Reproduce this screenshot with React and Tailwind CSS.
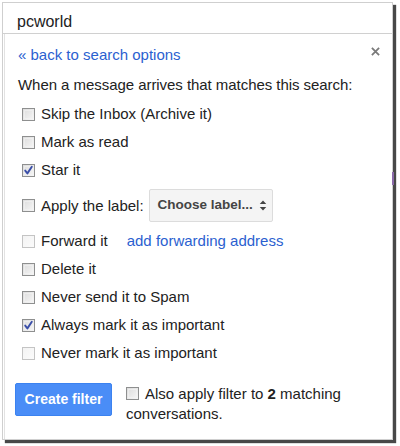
import React from "react";

function Box({ checked = false, disabled = false, className = "" }) {
  return (
    <span
      className={
        "relative inline-block w-[13px] h-[13px] shrink-0 border " +
        (disabled
          ? "border-[#c4c4c4] bg-[linear-gradient(135deg,#f3f3f3,#fbfbfb)] "
          : "border-[#8e8f8f] bg-[linear-gradient(135deg,#dcdcdc,#f6f6f6)] ") +
        className
      }
    >
      {!disabled && (
        <span className="absolute inset-[1px] border border-[#f4f4f4] opacity-60" />
      )}
      {checked && (
        <svg viewBox="0 0 13 13" className="absolute left-[-1px] top-[-1px] w-[13px] h-[13px]">
          <path d="M3.2 6.6 L5.4 9.4 L9.8 2.8" fill="none" stroke="#3a4ea8" strokeWidth="1.9" strokeLinecap="round" strokeLinejoin="round" />
        </svg>
      )}
    </span>
  );
}

function Row({ label, checked, disabled, children, h = "h-[28px]" }) {
  return (
    <div className={"flex items-center pl-[20px] " + h}>
      <Box checked={checked} disabled={disabled} />
      <span className="ml-[6px] text-[15px] text-[#222] leading-[20px] whitespace-nowrap">{label}</span>
      {children}
    </div>
  );
}

export default function App() {
  return (
    <div
      className="relative w-[400px] h-[446px] bg-white overflow-hidden"
      style={{ fontFamily: '"Liberation Sans", Arial, sans-serif' }}
    >
      <div className="ml-[2px] mt-[2px] w-[391px] h-[438px] border border-[#cfcfcf] bg-white shadow-[3px_3px_1px_rgba(40,40,40,0.85)] flex flex-col">
        <div className="h-[31px] shrink-0 border-b border-[#d0d0d0] pl-[14px] flex items-end pb-[1px]">
          <span className="text-[16px] text-[#222] leading-[20px]">pcworld</span>
        </div>
        <div className="relative flex-1 ml-[1px] border-l border-[#e2e2e2] flex flex-col">
          <div className="mt-[11px] h-[20px] flex items-center pl-[13px]">
            <span className="text-[15px] text-[#2b5fd0] leading-[20px]">« back to search options</span>
          </div>
          <svg viewBox="0 0 10 10" className="absolute left-[366px] top-[13px] w-[9px] h-[9px]">
            <path d="M1 1 L9 9 M9 1 L1 9" stroke="#7a7a7a" strokeWidth="2" />
          </svg>
          <div className="mt-[6px] h-[28px] flex items-center pl-[13px]">
            <span className="text-[15px] text-[#222] leading-[20px] tracking-[-0.05px]">When a message arrives that matches this search:</span>
          </div>
          <div className="-ml-[3px] mt-[1px] flex flex-col">
            <Row label="Skip the Inbox (Archive it)" />
            <Row label="Mark as read" />
            <Row label="Star it" checked />
            <Row label="Apply the label:" h="h-[43px]">
              <div className="ml-[5px] w-[124px] h-[33px] shrink-0 rounded-[2px] border border-[#dcdcdc] bg-[#f4f4f4] flex items-center pl-[8px]">
                <span className="text-[13.5px] font-bold text-[#444] whitespace-nowrap">Choose label...</span>
                <svg viewBox="0 0 8 14" className="ml-[6px] w-[8px] h-[13px] shrink-0">
                  <path d="M0.5 5.5 L4 1.5 L7.5 5.5 Z M0.5 8.5 L4 12.5 L7.5 8.5 Z" fill="#444" />
                </svg>
              </div>
            </Row>
            <Row label="Forward it" disabled>
              <span className="ml-[19px] text-[15px] text-[#2b5fd0] leading-[20px] whitespace-nowrap">add forwarding address</span>
            </Row>
            <Row label="Delete it" />
            <Row label="Never send it to Spam" />
            <Row label="Always mark it as important" checked />
            <Row label="Never mark it as important" disabled />
          </div>
          <div className="mt-[16px] flex items-start pl-[10px]">
            <div className="w-[97px] h-[33px] shrink-0 rounded-[2px] border border-[#3b82f0] bg-[#4a8df7] flex items-center justify-center">
              <span className="text-[14px] font-bold text-white">Create filter</span>
            </div>
            <div className="ml-[14px] mt-[1px] w-[230px] text-[15px] text-[#222] leading-[20px]">
              <Box className="align-[-1px] mr-[6px]" />
              Also apply filter to <span className="font-bold">2</span> matching conversations.
            </div>
          </div>
        </div>
      </div>
      <div className="absolute left-[392px] top-[172px] w-[2px] h-[13px] bg-[#8a6aa8]" />
    </div>
  );
}
